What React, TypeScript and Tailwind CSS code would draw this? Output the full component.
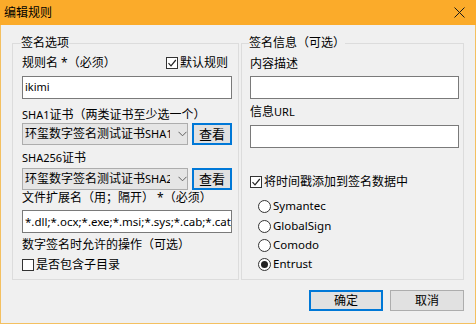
import React from "react";

const font = "font-['Noto_Sans','Noto_Sans_CJK_SC',sans-serif]";

// 拉丁文字用稍小字号，接近 Segoe UI 9pt 的宽度
const L = ({ children }: { children: React.ReactNode }) => <span className="text-[11px]">{children}</span>;

const CheckBox = ({ checked, label }: { checked: boolean; label: string }) => (
  <div className="flex h-[16px] items-center">
    <div className="flex h-[12px] w-[12px] items-center justify-center border border-[#333333] bg-white">
      {checked && (
        <svg width="10" height="10" viewBox="0 0 10 10">
          <path d="M1.5 5.2 L4 7.8 L8.8 2" fill="none" stroke="#222" strokeWidth="1.2" />
        </svg>
      )}
    </div>
    <span className="ml-[2px] leading-[16px]">{label}</span>
  </div>
);

const Radio = ({ checked, label, mt }: { checked?: boolean; label: string; mt: string }) => (
  <div className={`flex h-[16px] items-center pl-[8px] ${mt}`}>
    <div className="flex h-[13px] w-[13px] items-center justify-center rounded-full border border-[#333333] bg-white">
      {checked && <div className="h-[7px] w-[7px] rounded-full bg-[#222222]" />}
    </div>
    <span className="ml-[2px] text-[11.5px] leading-[16px]">{label}</span>
  </div>
);

const Combo = ({ text, sha }: { text: string; sha: string }) => (
  <div className="flex h-[22px] w-[166px] items-center border border-[#adadad] bg-[#e5e5e5]">
    <span className="ml-[2px] w-[145px] overflow-hidden whitespace-nowrap leading-[16px]">
      {text}
      <L>{sha}</L>
    </span>
    <svg className="ml-[8px]" width="9" height="6" viewBox="0 0 9 6">
      <path d="M0.5 0.8 L4.5 4.8 L8.5 0.8" fill="none" stroke="#606060" strokeWidth="1" />
    </svg>
  </div>
);

const ViewButton = () => (
  <button className="ml-[4px] flex h-[22px] w-[40px] items-center justify-center border-2 border-[#0078d7] bg-[#e1e1e1] text-[13px] leading-[16px]">
    查看
  </button>
);

export default function App() {
  return (
    <div className={`h-[324px] w-[476px] text-[12px] text-black ${font}`}>
      {/* 标题栏 */}
      <div className="flex h-[25px] items-center justify-between bg-[#fbab2a] pl-[4px] pr-[11px]">
        <span className="leading-[16px]">编辑规则</span>
        <svg width="11" height="11" viewBox="0 0 11 11">
          <path d="M0.5 0.5 L10.5 10.5 M10.5 0.5 L0.5 10.5" stroke="#1a1a1a" strokeWidth="1" />
        </svg>
      </div>

      <div className="flex h-[299px] flex-col border-x border-b border-[#f4c060] bg-[#f0f0f0] px-[11px]">
        <div className="mt-[10px] flex gap-[2px]">
          {/* 签名选项 */}
          <fieldset className="h-[245px] w-[228px] min-w-0 border border-[#dcdcdc] pl-[9px] pr-[6px]">
            <legend className="ml-[-1px] leading-[16px]">签名选项</legend>
            <div className="mt-[4px] flex h-[16px] items-center justify-between">
              <span className="leading-[16px]">规则名 *（必须）</span>
              <div className="mr-[4px]">
                <CheckBox checked label="默认规则" />
              </div>
            </div>
            <div className="mt-[5px] flex h-[23px] items-center border border-[#7a7a7a] bg-white pl-[2px] text-[11px]">
              ikimi
            </div>
            <div className="mt-[8px] h-[16px] leading-[16px]">
              <L>SHA1</L>证书（两类证书至少选一个）
            </div>
            <div className="flex items-center">
              <Combo text="环玺数字签名测试证书" sha="SHA1" />
              <ViewButton />
            </div>
            <div className="mt-[5px] h-[16px] leading-[16px]">
              <L>SHA256</L>证书
            </div>
            <div className="mt-[2px] flex items-center">
              <Combo text="环玺数字签名测试证书" sha="SHA256" />
              <ViewButton />
            </div>
            <div className="h-[16px] leading-[16px]">文件扩展名（用；隔开） *（必须）</div>
            <div className="mt-[4px] flex h-[23px] items-center overflow-hidden whitespace-nowrap border border-[#7a7a7a] bg-white pl-[2px] text-[11.5px]">
              *.dll;*.ocx;*.exe;*.msi;*.sys;*.cab;*.cat;*.ps1
            </div>
            <div className="mt-[4px] h-[16px] leading-[16px]">数字签名时允许的操作（可选）</div>
            <div className="mt-[4px]">
              <CheckBox checked={false} label="是否包含子目录" />
            </div>
          </fieldset>

          {/* 签名信息 */}
          <fieldset className="h-[245px] w-[224px] min-w-0 border border-[#dcdcdc] pl-[8px] pr-[4px]">
            <legend className="ml-[-1px] leading-[16px]">签名信息（可选）</legend>
            <div className="mt-[5px] h-[16px] leading-[16px]">内容描述</div>
            <div className="mt-[4px] h-[23px] border border-[#7a7a7a] bg-white" />
            <div className="mt-[5px] h-[16px] leading-[16px]">
              信息<L>URL</L>
            </div>
            <div className="mt-[5px] h-[23px] border border-[#7a7a7a] bg-white" />
            <div className="mt-[26px]">
              <CheckBox checked label="将时间戳添加到签名数据中" />
            </div>
            <Radio label="Symantec" mt="mt-[8px]" />
            <Radio label="GlobalSign" mt="mt-[4px]" />
            <Radio label="Comodo" mt="mt-[3px]" />
            <Radio checked label="Entrust" mt="mt-[3px]" />
          </fieldset>
        </div>

        <div className="mt-[10px] flex justify-end gap-[7px]">
          <button className="flex h-[21px] w-[74px] items-center justify-center border-2 border-[#0078d7] bg-[#e1e1e1] leading-[16px]">
            确定
          </button>
          <button className="flex h-[21px] w-[74px] items-center justify-center border border-[#adadad] bg-[#e1e1e1] leading-[16px]">
            取消
          </button>
        </div>
      </div>
    </div>
  );
}
